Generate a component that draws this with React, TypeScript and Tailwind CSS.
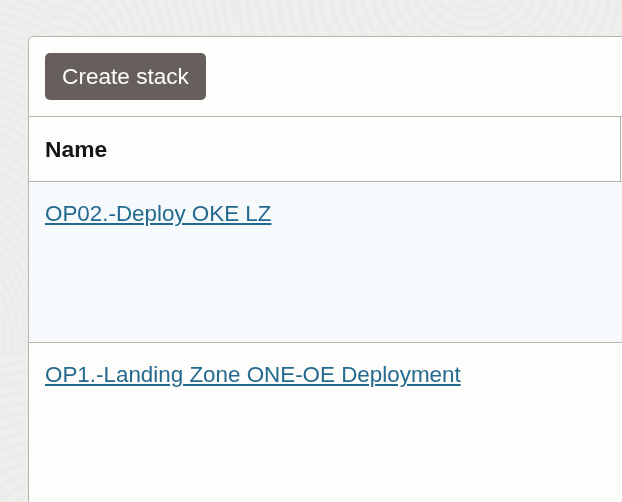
const rings = (count: number, step: number) => Array.from({ length: count }, (_, i) => 10 + i * step);

function Texture() {
  return (
    <svg className="absolute inset-0 h-full w-full" viewBox="0 0 622 502" fill="none" stroke="#eae9e8" strokeWidth="3" aria-hidden="true">
      <defs>
        <filter id="soft"><feGaussianBlur stdDeviation="1" /></filter>
        <clipPath id="corner"><rect width="50" height="350" /></clipPath>
        <clipPath id="left"><rect x="50" width="185" height="40" /></clipPath>
        <clipPath id="middle"><rect x="235" width="387" height="40" /></clipPath>
        <clipPath id="lower"><rect y="350" width="30" height="152" /></clipPath>
      </defs>
      <g filter="url(#soft)">
        <g clipPath="url(#corner)">
          {rings(42, 9).map((r) => <ellipse key={r} cx="-50" cy="340" rx={r * 0.75} ry={r} />)}
        </g>
        <g clipPath="url(#left)">
          {rings(24, 9).map((r) => <ellipse key={r} cx="58" cy="58" rx={r} ry={r * 1.1} />)}
        </g>
        <g clipPath="url(#middle)">
          {rings(34, 9).map((r) => <ellipse key={r} cx="475" cy="-18" rx={r * 1.15} ry={r} />)}
        </g>
        <g clipPath="url(#lower)">
          {rings(24, 10).map((r) => <ellipse key={r} cx="55" cy="540" rx={r * 1.2} ry={r} />)}
        </g>
      </g>
    </svg>
  );
}

const stacks = [
  { name: "OP02.-Deploy OKE LZ", row: "bg-[#f6fafd]" },
  { name: "OP1.-Landing Zone ONE-OE Deployment", row: "bg-[#fdfdfb]" },
];

export default function App() {
  return (
    <main className="relative h-[502px] w-[622px] overflow-hidden bg-[#f0efee] pt-9 pl-7 font-['Liberation_Sans',Arial,sans-serif] text-[22.4px] leading-7 text-[#161513]">
      <Texture />
      <section className="relative h-[480px] w-[620px] overflow-hidden rounded-[5px] border border-[#bab3ad] bg-[#fdfdfb]">
        <div className="flex h-20 items-start border-b border-[#bab3ad] pt-4 pl-4">
          <button className="h-[47px] w-[161px] rounded-[5px] bg-[#665f5b] text-center text-[22.6px] text-[#fdfdfb]">Create stack</button>
        </div>
        <div className="flex h-[65px] border-b border-[#bab3ad]">
          <div className="flex w-[592px] items-center border-r border-[#bab3ad] pl-4 text-[22.8px] font-bold">Name</div>
        </div>
        {stacks.map((stack) => (
          <div key={stack.name} className={`h-[161px] border-b border-[#bab3ad] pt-[18px] pl-4 ${stack.row}`}>
            <a href="#" className="text-[#236a8e] underline decoration-2 underline-offset-2">{stack.name}</a>
          </div>
        ))}
      </section>
    </main>
  );
}
